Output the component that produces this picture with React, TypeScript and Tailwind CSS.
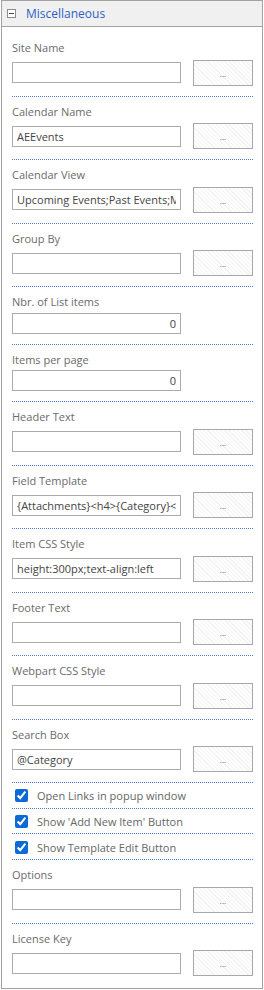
import type { ReactNode } from "react";

type Row =
  | { kind: "field"; label: string; value?: string; button?: boolean; right?: boolean }
  | { kind: "check"; label: string };

const ROWS: Row[] = [
  { kind: "field", label: "Site Name", button: true },
  { kind: "field", label: "Calendar Name", value: "AEEvents", button: true },
  { kind: "field", label: "Calendar View", value: "Upcoming Events;Past Events;My Events", button: true },
  { kind: "field", label: "Group By", button: true },
  { kind: "field", label: "Nbr. of List items", value: "0", right: true },
  { kind: "field", label: "Items per page", value: "0", right: true },
  { kind: "field", label: "Header Text", button: true },
  { kind: "field", label: "Field Template", value: "{Attachments}<h4>{Category}</h4>", button: true },
  { kind: "field", label: "Item CSS Style", value: "height:300px;text-align:left", button: true },
  { kind: "field", label: "Footer Text", button: true },
  { kind: "field", label: "Webpart CSS Style", button: true },
  { kind: "field", label: "Search Box", value: "@Category", button: true },
  { kind: "check", label: "Open Links in popup window" },
  { kind: "check", label: "Show 'Add New Item' Button" },
  { kind: "check", label: "Show Template Edit Button" },
  { kind: "field", label: "Options", button: true },
  { kind: "field", label: "License Key", button: true },
];

function TextBox({ value, right }: { value?: string; right?: boolean }) {
  return (
    <input
      readOnly
      value={value ?? ""}
      className={
        "w-[169px] h-[21px] shrink-0 border border-[#ababab] bg-white px-[4px] text-[11px] text-[#444444] outline-none " +
        (right ? "text-right" : "text-left")
      }
    />
  );
}

function DotsButton() {
  return (
    <button className="w-[60px] h-[26px] shrink-0 border border-[#a8a8a8] bg-[repeating-linear-gradient(45deg,#fdfdfd_0px,#fdfdfd_2px,#f4f4f4_2px,#f4f4f4_3px)] flex items-end justify-center pb-[7px] text-[8px] leading-none text-[#555555]">
      ...
    </button>
  );
}

function Section({ last, children, first }: { last?: boolean; first?: boolean; children: ReactNode }) {
  return (
    <div
      className={
        (first ? "pt-[12px] " : "pt-[6px] ") +
        "pb-[10px] " +
        (last ? "" : "border-b border-dotted border-[#4f7ad2]")
      }
    >
      {children}
    </div>
  );
}

export default function App() {
  return (
    <div className="w-[264px] h-[990px] bg-white font-['Open_Sans',sans-serif]">
      <div className="mx-px h-[989px] border border-[#a3a3a3] flex flex-col overflow-hidden">
        {/* Header */}
        <div className="h-[26px] shrink-0 bg-[#f0f0f0] border-b border-[#a3a3a3] flex items-center">
          <div className="ml-[5px] w-[9px] h-[9px] border border-[#8c8c8c] bg-white flex items-center justify-center">
            <div className="w-[5px] h-px bg-[#444444]" />
          </div>
          <span className="ml-[10px] text-[12px] text-[#2f5fc6]">Miscellaneous</span>
        </div>

        {/* Properties */}
        <div className="pl-[10px] pr-[9px]">
          {ROWS.map((row, i) => {
            const last = i === ROWS.length - 1;
            if (row.kind === "check") {
              return (
                <div
                  key={row.label}
                  className="h-[25.7px] border-b border-dotted border-[#4f7ad2] flex items-center gap-[9px] pl-[3px] pt-[1px]"
                >
                  <input type="checkbox" defaultChecked className="w-[13px] h-[13px] m-0 accent-[#0a6ad6]" />
                  <span className="text-[11px] leading-none text-[#666666]">{row.label}</span>
                </div>
              );
            }
            return (
              <Section key={row.label} first={i === 0} last={last}>
                <div className="h-[17.5px] text-[11px] leading-[17.5px] text-[#6b6b6b]">{row.label}</div>
                {row.button ? (
                  <div className="mt-[3px] h-[26px] flex items-center justify-between">
                    <TextBox value={row.value} right={row.right} />
                    <DotsButton />
                  </div>
                ) : (
                  <div className="mt-[2px] flex">
                    <TextBox value={row.value} right={row.right} />
                  </div>
                )}
              </Section>
            );
          })}
        </div>
      </div>
    </div>
  );
}
